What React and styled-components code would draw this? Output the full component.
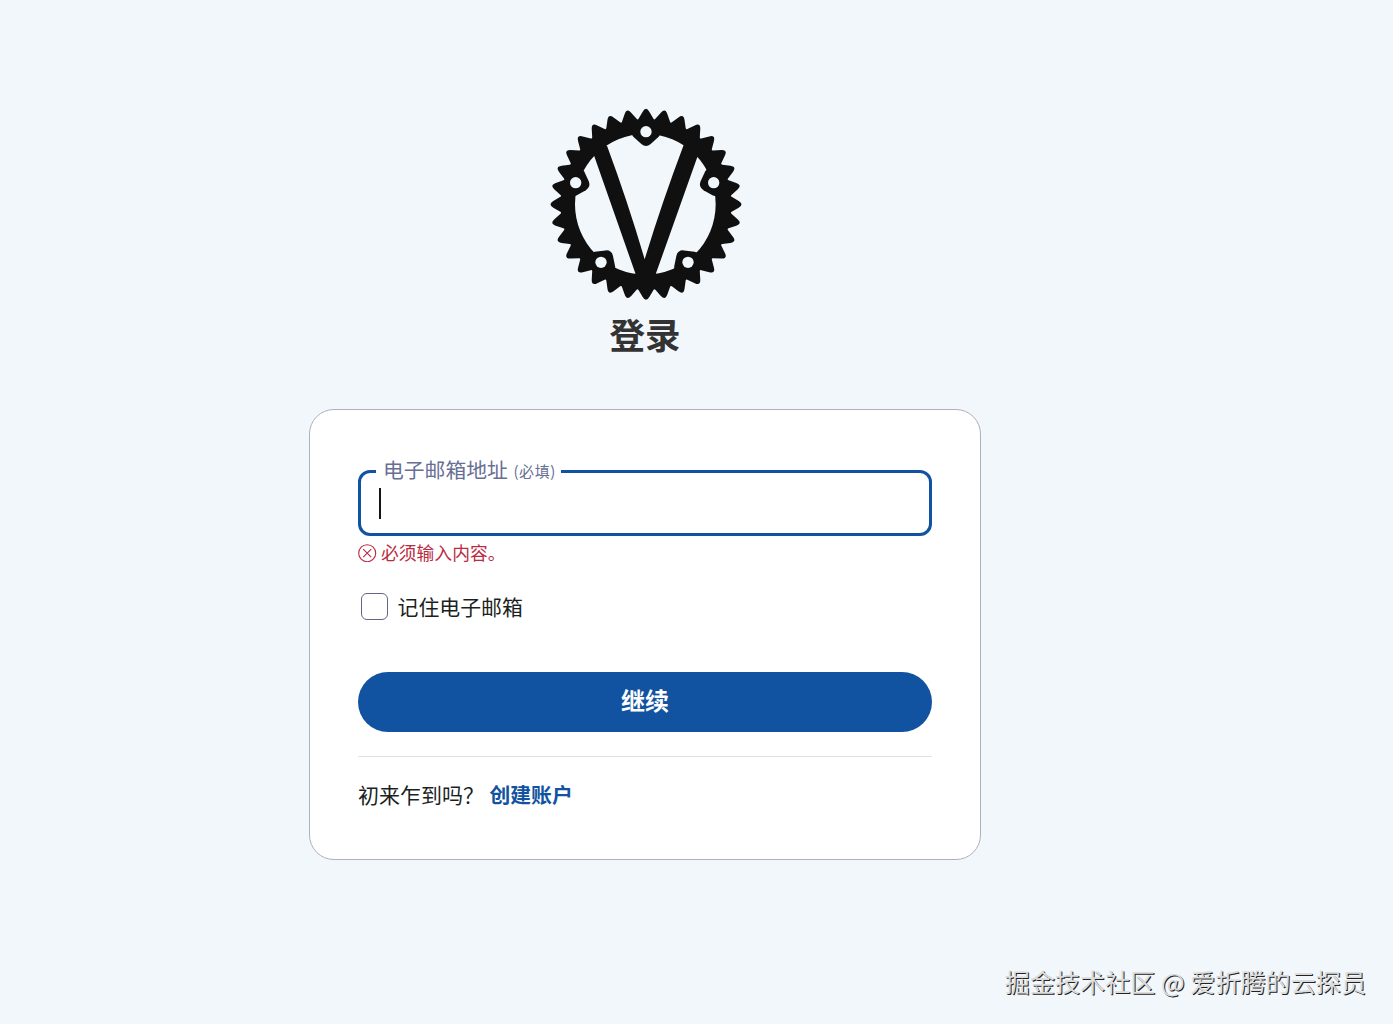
import React from "react";
import { styled, createGlobalStyle } from "styled-components";

const GlobalStyle = createGlobalStyle`
*{
box-sizing:border-box;
}
body{
margin:0;
background-color:#f2f7fb;
font-family:"Noto Sans CJK SC", sans-serif;
color:#1b1f23;
}
`;

const Page = styled.main`
height:1024px;
width:1393px;
display:flex;
flex-direction:column;
overflow:hidden;
`;

const LoginColumn = styled.section`
width:672px;
margin-left:309px;
padding-top:107px;
display:flex;
flex-direction:column;
align-items:center;
`;

const Logo = styled.svg`
display:block;
width:194px;
height:194px;
margin-left:2px;
`;

const Title = styled.h1`
margin:7px 0 0;
height:52px;
line-height:52px;
font-size:35.5px;
font-weight:700;
color:#333;
`;

const Card = styled.form`
width:672px;
height:451px;
margin-top:49px;
padding:46px 48px 48px;
background-color:#fff;
border:1px solid #aeb0be;
border-radius:25px;
display:flex;
flex-direction:column;
`;

const EmailField = styled.fieldset`
height:80px;
min-width:0;
margin:0;
padding:2px 18px 0;
border:3px solid #1153a0;
border-radius:12px;
`;

const EmailLabel = styled.legend`
height:30px;
line-height:26px;
margin-left:-3px;
padding:0 5px 0 7px;
font-size:20.8px;
color:#686f95;
white-space:nowrap;
`;

const Required = styled.span`
margin-left:1px;
font-size:15px;
line-height:1;
letter-spacing:0.6px;
vertical-align:1px;
`;

const Caret = styled.div`
width:2px;
height:31px;
background-color:#151515;
`;

const ErrorMessage = styled.div`
height:26px;
margin-top:3px;
display:flex;
align-items:center;
gap:4px;
font-size:17.8px;
line-height:26px;
color:#b92b42;
`;

const Remember = styled.label`
height:30px;
margin:26px 0 0 3px;
display:flex;
align-items:center;
gap:9.5px;
font-size:20.9px;
line-height:30px;
`;

const CheckBox = styled.span`
width:27px;
height:27px;
border:1px solid #656586;
border-radius:6px;
`;

const ContinueButton = styled.button`
flex:none;
height:60px;
margin-top:51px;
padding:0 0 6px;
border:0;
border-radius:30px;
background-color:#1153a0;
color:#fff;
font-family:inherit;
font-size:24px;
font-weight:700;
`;

const SignUp = styled.div`
margin-top:24px;
padding-top:22px;
border-top:1px solid #e0e2e6;
display:flex;
gap:5.5px;
font-size:21px;
line-height:30px;
`;

const SignUpLink = styled.a`
color:#1153a0;
font-size:20.8px;
font-weight:700;
`;

const Watermark = styled.footer`
margin:auto 27px 25px auto;
font-size:25.1px;
line-height:36px;
color:#dcdcdc;
text-shadow:1px 1px 0.5px #222;
white-space:nowrap;
`;

const TEETH = 32;
const TIP = 295;
const ROOT = 254;

const polar = (r, step) => {
	const angle = (step * Math.PI) / TEETH;
	return [r * Math.sin(angle), -r * Math.cos(angle)];
};
const mix = (a, b, t) => a.map((v, i) => (v + (b[i] - v) * t).toFixed(2)).join(' ');

// outline of the chainring, every corner is softened with a quadratic curve
const gearPath = () => {
	const points = [...new Array(TEETH * 2)].map((_, i) => polar(i % 2 ? ROOT : TIP, i));
	return points.map((point, i) => {
		const prev = points[(i + points.length - 1) % points.length];
		const next = points[(i + 1) % points.length];
		const round = i % 2 ? 0.1 : 0.4;
		return `${i ? 'L' : 'M'}${mix(point, prev, round)}Q${mix(point, point, 0)} ${mix(point, next, round)}`;
	}).join('') + 'Z';
};

const bolts = [
	{ angle: 0, x: 0, y: -218 },
	{ angle: 72, x: 203, y: -65 },
	{ angle: 144, x: 126, y: 174 },
	{ angle: 216, x: -135, y: 174 },
	{ angle: 288, x: -211, y: -65 },
];

const ChainringLogo = () => (
	<Logo viewBox="-291 -292 582 582" fill="#101010" aria-hidden="true">
		<path fillRule="evenodd" d={`${gearPath()}M-213 0a211 211 0 1 0 422 0a211 211 0 1 0-422 0Z`} />
		<path d="M-167-178-117-176Q-53-3-4 165Q47-3 113-178L166-176 30 207V225H-32V207Z" />
		{bolts.map((bolt) => (
			<g key={bolt.angle}>
				<path
					transform={`translate(${bolt.angle ? -4 : 0} 0) rotate(${bolt.angle})`}
					d="M-48-218-38-203-14-181Q0-169 14-181L38-203 48-218Z"
				/>
				<circle cx={bolt.x} cy={bolt.y} r="17" fill="#f2f7fb" />
			</g>
		))}
	</Logo>
);

const ErrorIcon = () => (
	<svg width="19" height="19" viewBox="0 0 19 19" fill="none" stroke="currentColor" strokeWidth="1.1">
		<circle cx="9.2" cy="10.2" r="8.5" />
		<path d="M5.2 6.2l8 8M13.2 6.2l-8 8" />
	</svg>
);

const App = () => {
	return (<>
		<GlobalStyle />
		<Page>
			<LoginColumn>
				<ChainringLogo />
				<Title>登录</Title>
				<Card>
					<EmailField>
						<EmailLabel>电子邮箱地址 <Required>(必填)</Required></EmailLabel>
						<Caret />
					</EmailField>
					<ErrorMessage><ErrorIcon />必须输入内容。</ErrorMessage>
					<Remember><CheckBox />记住电子邮箱</Remember>
					<ContinueButton type="button">继续</ContinueButton>
					<SignUp>
						<span>初来乍到吗？</span>
						<SignUpLink>创建账户</SignUpLink>
					</SignUp>
				</Card>
			</LoginColumn>
			<Watermark>掘金技术社区 @ 爱折腾的云探员</Watermark>
		</Page>
	</>)
}

export default App;
